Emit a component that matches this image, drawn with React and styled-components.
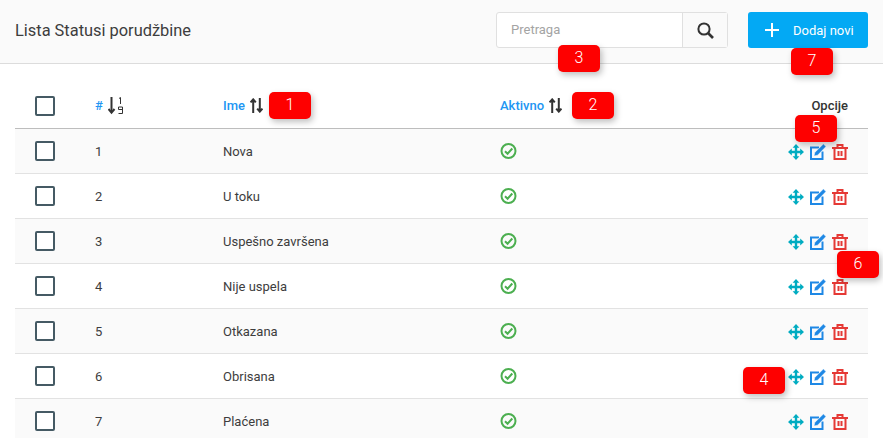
import React from "react";
import styled, { createGlobalStyle } from "styled-components";

const Global = createGlobalStyle`
  html, body { margin: 0; padding: 0; background: #fff; }
  body { font-family: Roboto, "Liberation Sans", sans-serif; color: #3a3a3a; overflow: hidden; }
`;

const Page = styled.div`
  position: relative;
  width: 883px;
  height: 438px;
  overflow: hidden;
`;

const TopBar = styled.header`
  height: 64px;
  box-sizing: border-box;
  background: #fafafa;
  border-bottom: 1px solid #dcdcdc;
  display: flex;
  align-items: center;
  padding: 0 15px 3px;
`;

const Title = styled.h1`
  margin: 0;
  font-size: 16.4px;
  font-weight: 400;
  color: #3d3d3d;
  flex: 1;
`;

const Search = styled.div`
  display: flex;
  width: 232px;
  height: 36px;
  box-sizing: border-box;
  border: 1px solid #e0e0e0;
  border-radius: 3px;
  background: #fff;
  margin-right: 20px;
`;

const SearchText = styled.div`
  flex: 1;
  padding-left: 14px;
  font-size: 13px;
  line-height: 34px;
  color: #a4a4a4;
`;

const SearchButton = styled.div`
  width: 44px;
  background: #fafafa;
  border-left: 1px solid #e0e0e0;
  display: flex;
  align-items: center;
  justify-content: center;
`;

const AddButton = styled.div`
  width: 120px;
  height: 36px;
  background: #03a9f4;
  border-radius: 3px;
  color: #fff;
  font-size: 13px;
  display: flex;
  align-items: center;
  padding-left: 16px;
  box-sizing: border-box;
  gap: 13px;
`;

const Table = styled.div`
  margin: 0 15px;
`;

const Row = styled.div`
  display: grid;
  grid-template-columns: 80px 128px 277px 180px 1fr;
  align-items: center;
  box-sizing: border-box;
  height: 45px;
  border-bottom: 1px solid #e2e2e2;
  background: ${({ $odd }) => ($odd ? "#fafafa" : "#fff")};
  font-size: 13px;
  color: #3d3d3d;
`;

const HeadRow = styled(Row)`
  height: 65px;
  border-bottom: 1px solid #bdbdbd;
  background: #fff;
  font-weight: 500;
  padding-top: 19px;
`;

const Box = styled.span`
  display: block;
  width: 20px;
  height: 20px;
  box-sizing: border-box;
  margin-left: 20px;
  border: 2px solid #455a64;
  border-radius: 2px;
  background: #fff;
`;

const HeadCell = styled.div`
  display: flex;
  align-items: center;
  gap: 5px;
  color: #2196f3;
`;

const Options = styled.div`
  display: flex;
  justify-content: flex-end;
  align-items: center;
  padding-right: 20px;
  color: #333;
`;

const Actions = styled(Options)`
  gap: 6px;
  padding-top: 2px;
`;

const Badge = styled.div`
  position: absolute;
  left: ${({ $x }) => $x}px;
  top: ${({ $y }) => $y}px;
  width: 42px;
  height: 27px;
  border-radius: 5px;
  background: #fe0000;
  color: #fff;
  font-size: 16px;
  font-weight: 300;
  line-height: 26px;
  text-align: center;
  box-shadow: 2px 3px 6px rgba(0, 0, 0, 0.25);
`;

const Sort = () => (
  <svg width="13" height="15" viewBox="0 0 13 15" fill="none" stroke="#333" strokeWidth="2">
    <path d="M3.2 15V2M0.6 4.4L3.2 1.4l2.6 3" />
    <path d="M9.8 0v13M7.2 10.6l2.6 3 2.6-3" />
  </svg>
);

const SortNumeric = () => (
  <svg width="16" height="18" viewBox="0 0 16 18" fill="none" stroke="#333">
    <path d="M3.5 0v15" strokeWidth="2" />
    <path d="M0.5 12l3 3.6 3-3.6" strokeWidth="2" />
    <path d="M11 1.5l1.5-1v6.5" />
    <path d="M14.5 12.5H10.5V10h4v6.5h-4" />
  </svg>
);

const Check = () => (
  <svg width="17" height="17" viewBox="0 0 17 17" fill="none" stroke="#4caf50" strokeWidth="2">
    <circle cx="8.5" cy="8" r="7" />
    <path d="M5 8.200l2.600 2.500L12.300 5.500" />
  </svg>
);

const Move = () => (
  <svg width="16" height="16" viewBox="0 0 16 16" fill="#00acc1">
    <path d="M8 0l3.400 3.800H9.200V6.800h3V4.600L16 8l-3.800 3.400V9.200H9.200v3h2.200L8 16l-3.400-3.800h2.200V9.200h-3v2.200L0 8l3.800-3.400v2.200h3V3.800H4.600z" />
  </svg>
);

const Edit = () => (
  <svg width="16" height="16" viewBox="0 0 16 16" fill="none">
    <path d="M9 3.500H1V15h11.500V7.500" stroke="#1e88e5" strokeWidth="2" />
    <path d="M13.400 0L16 2.600 7.600 11.200 4 12l.8-3.600z" fill="#1e88e5" stroke="#fff" strokeWidth="0.500" />
  </svg>
);

const Trash = () => (
  <svg width="16" height="16" viewBox="0 0 16 16" fill="none" stroke="#e53935" strokeWidth="2">
    <path d="M0 4h16M5.500 4V1h5v3M2.500 4v11h11V4M6.500 7v5M9.500 7v5" />
  </svg>
);

const rows = ["Nova", "U toku", "Uspešno završena", "Nije uspela", "Otkazana", "Obrisana", "Plaćena"];

const badges = [
  { n: 1, x: 269, y: 92 },
  { n: 2, x: 572, y: 92 },
  { n: 3, x: 558, y: 45 },
  { n: 4, x: 743, y: 367 },
  { n: 5, x: 795, y: 115 },
  { n: 6, x: 837, y: 251 },
  { n: 7, x: 791, y: 48 },
];

export default function App() {
  return (
    <Page>
      <Global />
      <TopBar>
        <Title>Lista Statusi porudžbine</Title>
        <Search>
          <SearchText>Pretraga</SearchText>
          <SearchButton>
            <svg width="17" height="17" viewBox="0 0 17 17" fill="none" stroke="#333" strokeWidth="2">
              <circle cx="7" cy="7" r="5.600" />
              <path d="M11 11l5 5" strokeWidth="2.600" />
            </svg>
          </SearchButton>
        </Search>
        <AddButton>
          <svg width="16" height="16" viewBox="0 0 16 16" stroke="#fff" strokeWidth="2">
            <path d="M8 1v14M1 8h14" />
          </svg>
          Dodaj novi
        </AddButton>
      </TopBar>
      <Table>
        <HeadRow>
          <Box />
          <HeadCell># <SortNumeric /></HeadCell>
          <HeadCell>Ime <Sort /></HeadCell>
          <HeadCell>Aktivno <Sort /></HeadCell>
          <Options>Opcije</Options>
        </HeadRow>
        {rows.map((name, i) => (
          <Row key={name} $odd={i % 2 === 0}>
            <Box />
            <div>{i + 1}</div>
            <div>{name}</div>
            <Check />
            <Actions>
              <Move />
              <Edit />
              <Trash />
            </Actions>
          </Row>
        ))}
      </Table>
      {badges.map((b) => (
        <Badge key={b.n} $x={b.x} $y={b.y}>{b.n}</Badge>
      ))}
    </Page>
  );
}
